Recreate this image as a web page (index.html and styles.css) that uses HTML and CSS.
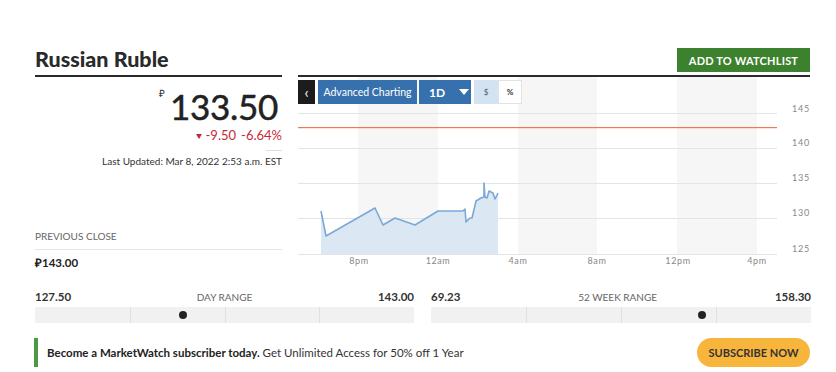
FILE: index.html
```html
<!DOCTYPE html>
<html>
<head>
<meta charset="utf-8">
<link rel="stylesheet" href="styles.css">
</head>
<body>
<div class="wrap">
  <div class="top">
    <div class="head-left"><h1 class="title">Russian Ruble</h1></div>
    <div class="head-right"><button class="watch-btn">ADD TO WATCHLIST</button></div>

    <div class="quote">
      <div class="price"><span class="cur">₽</span>133.50</div>
      <div class="change"><span class="tri"></span>-9.50<span class="pct">-6.64%</span></div>
      <div class="rule-short"></div>
      <div class="updated">Last Updated: Mar 8, 2022 2:53 a.m. EST</div>
      <div class="prev-label">PREVIOUS CLOSE</div>
      <div class="prev-value">₽143.00</div>
    </div>

    <div class="chart">
      <svg class="chart-svg" width="512" height="195" viewBox="0 0 512 195">
        <rect x="60" y="0" width="80" height="177" fill="#f6f6f7"/>
        <rect x="220" y="0" width="79" height="177" fill="#f6f6f7"/>
        <rect x="379" y="0" width="80" height="177" fill="#f6f6f7"/>
        <g fill="#e4e4e4">
          <rect x="0" y="36" width="479" height="1"/>
          <rect x="0" y="71" width="479" height="1"/>
          <rect x="0" y="106" width="479" height="1"/>
          <rect x="0" y="141" width="479" height="1"/>
          <rect x="0" y="177" width="479" height="1"/>
        </g>
        <rect x="0" y="50" width="479" height="1.2" fill="#f07a4f"/>
        <path d="M23 134 L28 159 L77 131 L85 148 L97 141 L117 148 L140 134 L165 134 L167 132 L168 145 L172 141 L174 141 L178 124 L183 121 L186 120 L186 106 L187 120 L189 121 L191 114 L195 116 L197 122 L200 116 L200 177 L23 177 Z" fill="#dbe7f2"/>
        <path d="M23 134 L28 159 L77 131 L85 148 L97 141 L117 148 L140 134 L165 134 L167 132 L168 145 L172 141 L174 141 L178 124 L183 121 L186 120 L186 106 L187 120 L189 121 L191 114 L195 116 L197 122 L200 116" fill="none" stroke="#7aa9d8" stroke-width="1.6" stroke-linejoin="round"/>
        <g class="ylab">
          <text x="494" y="35">145</text>
          <text x="494" y="69">140</text>
          <text x="494" y="104">135</text>
          <text x="494" y="139">130</text>
          <text x="494" y="175">125</text>
        </g>
        <g class="xlab" text-anchor="middle">
          <text x="61" y="187">8pm</text>
          <text x="140" y="187">12am</text>
          <text x="220" y="187">4am</text>
          <text x="299" y="187">8am</text>
          <text x="380" y="187">12pm</text>
          <text x="459" y="187">4pm</text>
        </g>
      </svg>
      <div class="toolbar">
        <button class="tb tb-back">&lsaquo;</button>
        <button class="tb tb-blue tb-adv">Advanced Charting</button>
        <button class="tb tb-blue tb-range">1D <span class="caret"></span></button>
        <button class="tb tb-dollar">$</button>
        <button class="tb tb-pct">%</button>
      </div>
    </div>
  </div>

  <div class="ranges">
    <div class="range">
      <div class="range-labels"><span class="rv">127.50</span><span class="rl">DAY RANGE</span><span class="rv">143.00</span></div>
      <div class="bar"><span></span><span></span><span></span><span></span><i class="dot" style="left:39%"></i></div>
    </div>
    <div class="range">
      <div class="range-labels"><span class="rv">69.23</span><span class="rl">52 WEEK RANGE</span><span class="rv">158.30</span></div>
      <div class="bar"><span></span><span></span><span></span><span></span><i class="dot" style="left:71.3%"></i></div>
    </div>
  </div>

  <div class="sub">
    <p class="sub-text"><b>Become a MarketWatch subscriber today.</b> Get Unlimited Access for 50% off 1 Year</p>
    <button class="sub-btn">SUBSCRIBE NOW</button>
  </div>
</div>
</body>
</html>
```

FILE: styles.css
```css
* { box-sizing: border-box; }
html, body { margin: 0; padding: 0; background: #fff; }
body { font-family: Lato, "Open Sans", Arial, sans-serif; color: #222; }

.wrap { width: 775px; margin-left: 35px; padding-top: 48px; }

.top {
  display: grid;
  grid-template-columns: 247px 512px;
  column-gap: 16px;
}

.head-left {
  height: 29px;
  border-bottom: 2px solid #2a2a2a;
  display: flex;
  align-items: flex-start;
}
.title {
  margin: 0;
  font-size: 21.5px;
  font-weight: 900;
  line-height: 24px;
  margin-top: -1px;
  color: #2a2a2a;
}
.head-right {
  height: 29px;
  border-bottom: 2px solid #2a2a2a;
  display: flex;
  justify-content: flex-end;
  align-items: flex-start;
}
.watch-btn {
  height: 24px;
  width: 133px;
  border: 0;
  background: #3c812d;
  color: #fff;
  font-family: Lato, sans-serif;
  font-weight: 700;
  font-size: 11px;
  letter-spacing: 0.2px;
  padding: 0;
}

.quote {
  text-align: right;
  padding-top: 9px;
}
.price {
  font-size: 35px;
  line-height: 40px;
  color: #222;
  font-weight: 400;
  letter-spacing: -0.3px;
  padding-right: 4px;
  -webkit-text-stroke: 0.5px #222;
}
.cur {
  font-size: 10px;
  vertical-align: top;
  line-height: 14px;
  margin-right: 5px;
  color: #333;
  -webkit-text-stroke: 0;
}
.change {
  margin-top: 1px;
  font-size: 13px;
  line-height: 16px;
  color: #c72a37;
}
.tri {
  display: inline-block;
  width: 0; height: 0;
  border-left: 3.5px solid transparent;
  border-right: 3.5px solid transparent;
  border-top: 5px solid #c72a37;
  margin-right: 4px;
  vertical-align: 1px;
}
.pct { margin-left: 5px; }
.rule-short {
  width: 16px;
  height: 1px;
  background: #ddd;
  margin: 7px 0 0 auto;
}
.updated {
  font-size: 10px;
  line-height: 14px;
  margin-top: 3px;
  color: #333;
}
.prev-label {
  text-align: left;
  font-size: 10px;
  color: #666;
  line-height: 14px;
  margin-top: 61px;
  padding-bottom: 6px;
  border-bottom: 1px solid #e6e6e6;
}
.prev-value {
  text-align: left;
  font-size: 11.5px;
  font-weight: 700;
  line-height: 14px;
  margin-top: 6px;
}

.chart { position: relative; height: 195px; }
.chart-svg { display: block; overflow: visible; }
.ylab text { font-size: 9px; fill: #888; letter-spacing: 0.8px; font-family: Lato, sans-serif; }
.xlab text { font-size: 9px; fill: #888; letter-spacing: 0.6px; font-family: Lato, sans-serif; }

.toolbar {
  position: absolute;
  top: 3px;
  left: 0;
  display: flex;
  gap: 2px;
}
.tb {
  height: 24px;
  border: 0;
  padding: 0;
  font-family: Lato, sans-serif;
  font-size: 11px;
  cursor: pointer;
}
.tb-back { width: 17px; background: #1c1c1c; color: #fff; font-size: 15px; line-height: 20px; margin-right: 1px; }
.tb-blue { background: #3771ad; color: #fff; }
.tb-adv { width: 99px; font-size: 10.5px; }
.tb-range { width: 52px; font-weight: 700; font-size: 12px; text-align: left; padding-left: 10px; display: flex; align-items: center; margin-right: 1px; }
.caret {
  display: inline-block;
  width: 0; height: 0;
  border-left: 5px solid transparent;
  border-right: 5px solid transparent;
  border-top: 6px solid #fff;
  margin-left: 14px;
}
.tb-dollar { width: 24px; background: #d4e3f1; color: #556; font-size: 8px; }
.tb-pct { width: 24px; background: #fff; border: 1px solid #e2e2e2; margin-left: -2px; color: #333; font-size: 8px; font-weight: 700; }

.ranges {
  display: grid;
  grid-template-columns: 379px 380px;
  column-gap: 17px;
  margin-top: 18px;
}
.range-labels {
  display: flex;
  justify-content: space-between;
  align-items: baseline;
  line-height: 14px;
}
.rv { font-size: 11.5px; font-weight: 700; color: #333; }
.rl { font-size: 10px; color: #666; }
.bar {
  position: relative;
  margin-top: 3px;
  height: 16px;
  background: #f1f1f1;
  display: grid;
  grid-template-columns: repeat(4, 1fr);
}
.bar span { border-left: 1px solid #e0e0e0; }
.bar span:first-child { border-left: 0; }
.dot {
  position: absolute;
  top: 4px;
  width: 8px;
  height: 8px;
  margin-left: -4px;
  border-radius: 50%;
  background: #222;
}

.sub {
  margin-top: 15px;
  display: flex;
  align-items: center;
  justify-content: space-between;
  height: 29px;
}
.sub-text {
  margin: 0 0 0 -1px;
  border-left: 4px solid #4a9a45;
  height: 29px;
  line-height: 29px;
  padding-left: 9px;
  font-size: 11.5px;
  color: #333;
}
.sub-text b { color: #222; }
.sub-btn {
  width: 113px;
  height: 29px;
  border: 0;
  border-radius: 15px;
  background: #f8b53b;
  color: #333;
  font-family: Lato, sans-serif;
  font-weight: 700;
  font-size: 11px;
  padding: 0;
}
```
